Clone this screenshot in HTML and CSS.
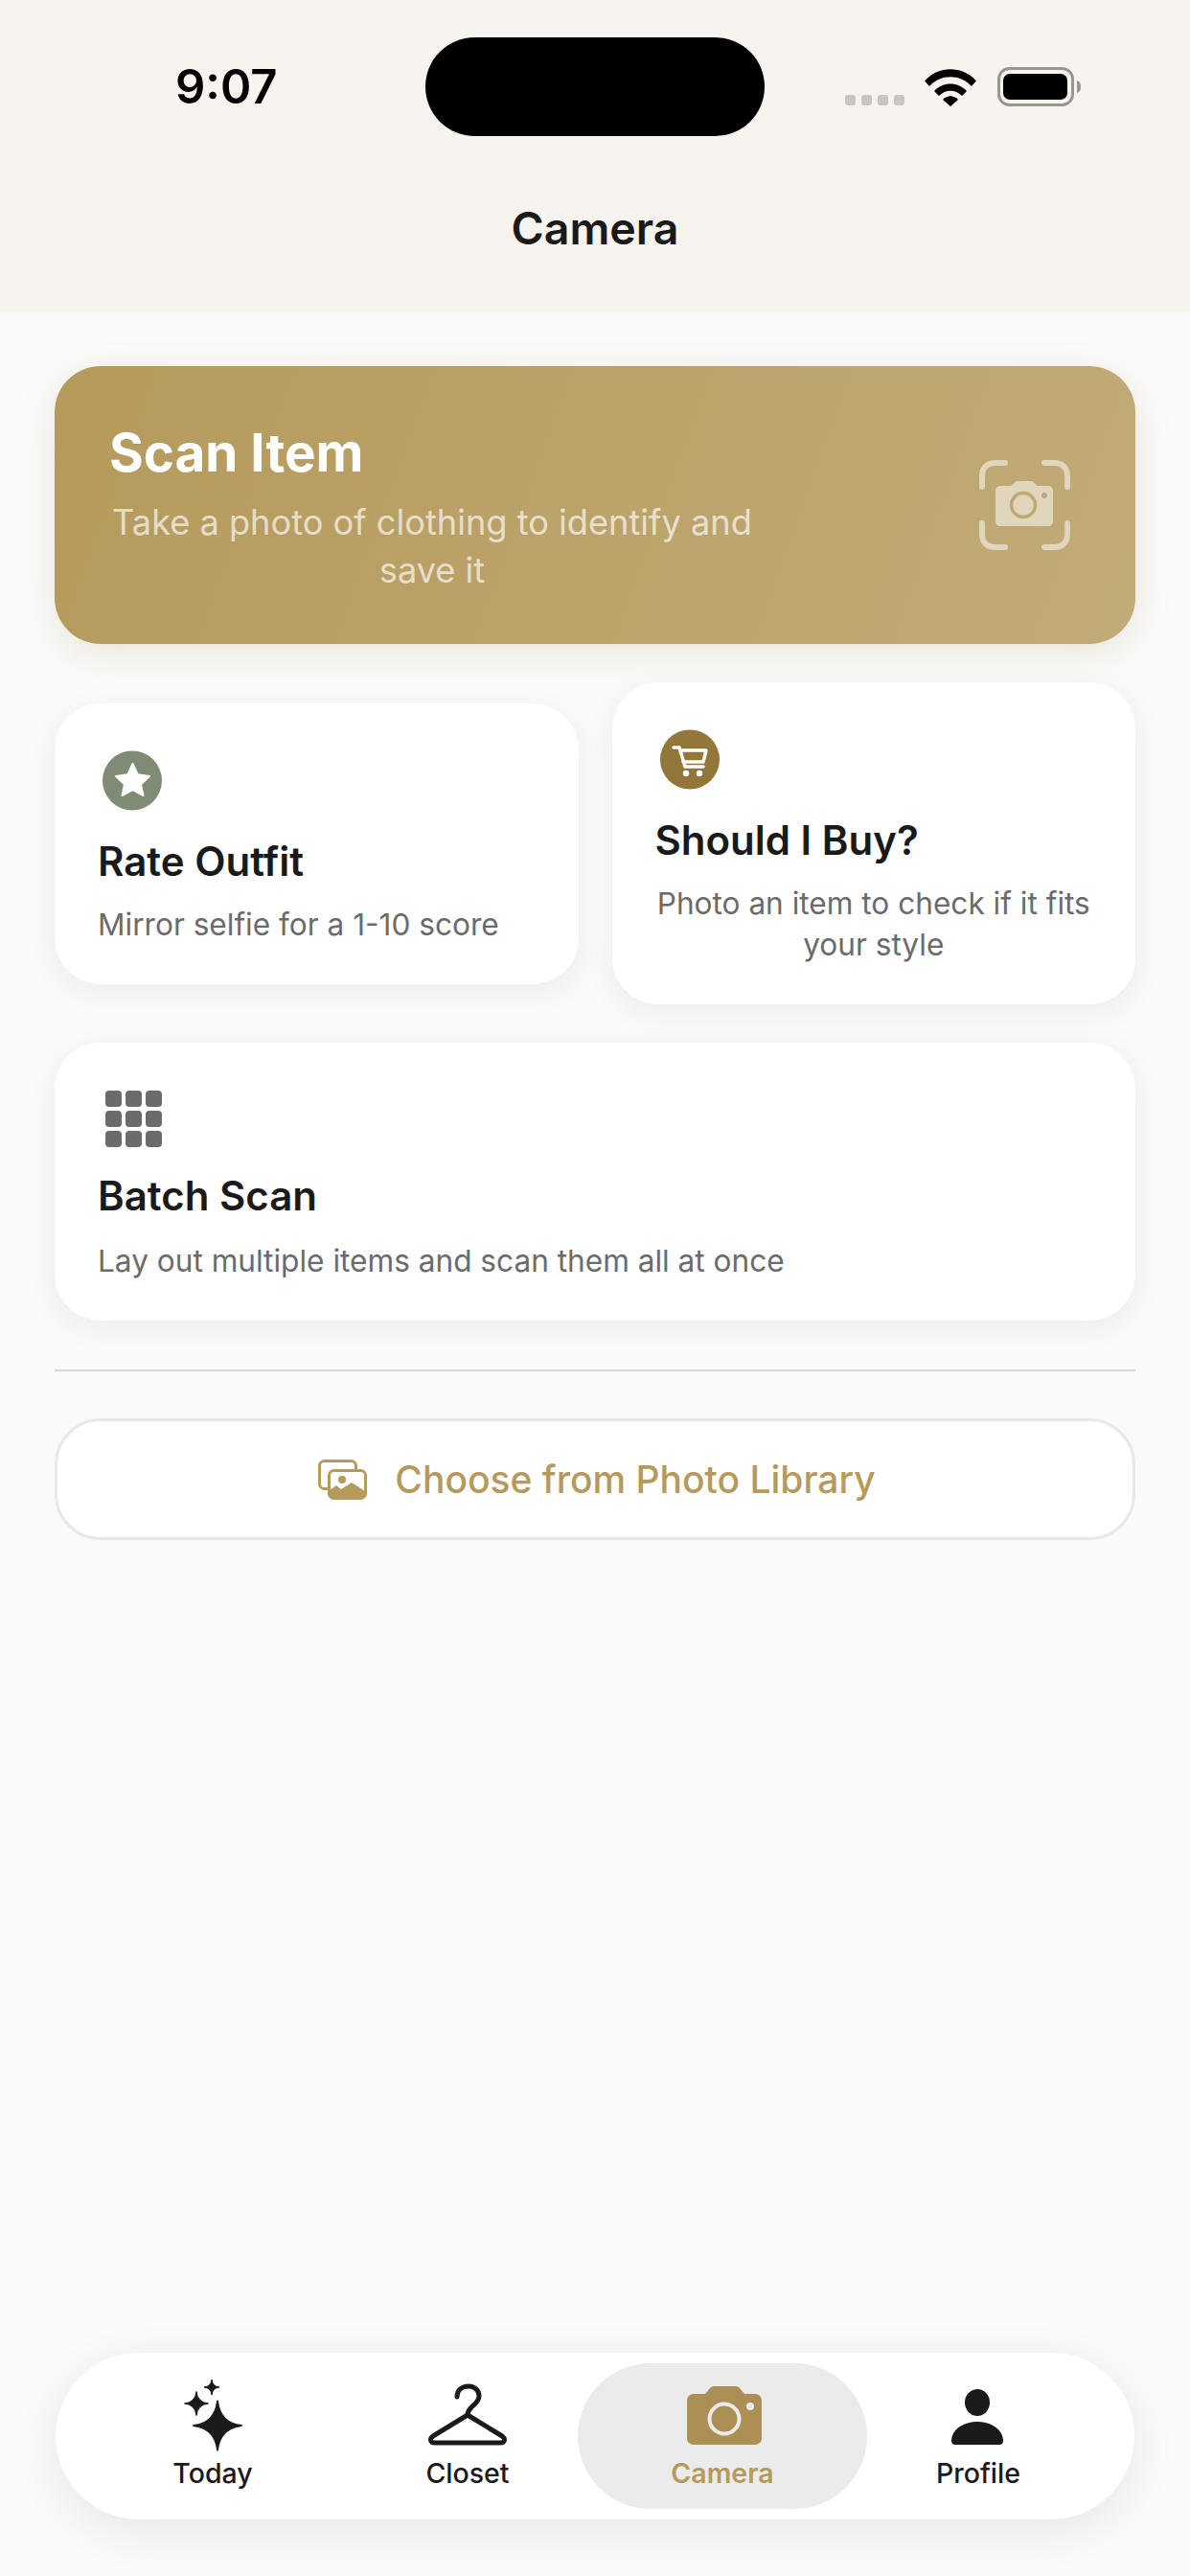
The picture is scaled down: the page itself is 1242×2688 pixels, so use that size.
FILE: index.html
```html
<!DOCTYPE html>
<html lang="en">
<head>
    <meta charset="UTF-8">
    <meta name="viewport" content="width=device-width, initial-scale=1">
    <title>Camera</title>
    <link rel="stylesheet" href="styles.css">
</head>
<body>
    <header class="header">
        <div class="status-bar">
            <div class="time">9:07</div>
            <div class="island"></div>
            <div class="status-icons">
                <div class="signal"><span></span><span></span><span></span><span></span></div>
                <svg class="wifi" width="54" height="39" viewBox="0 0 54 39">
                    <path d="M0 12.5C14-4 40-4 54 12.5L49 18C37 5 17 5 5 18Z"/>
                    <path d="M10 23C19 13 35 13 44 23L39 28C32 21 22 21 15 28Z"/>
                    <path d="M19 32C24 27 30 27 35 32L27 39Z"/>
                </svg>
                <svg class="battery" width="87" height="41" viewBox="0 0 87 41">
                    <rect x="1.5" y="1.5" width="77" height="38" rx="11" fill="none" stroke="#99968f" stroke-width="3"/>
                    <rect x="6" y="7" width="67" height="27" rx="7"/>
                    <path d="M83 14C86 15 87 17 87 20.500C87 24 86 26 83 27Z" fill="#99968f"/>
                </svg>
            </div>
        </div>
        <h1 class="page-title">Camera</h1>
    </header>

    <main class="content">
        <section class="scan-card">
            <div class="scan-text">
                <h2>Scan Item</h2>
                <p>Take a photo of clothing to identify and save it</p>
            </div>
            <svg class="scan-icon" width="95" height="94" viewBox="0 0 95 94">
                <g fill="none" stroke="#e0d6bc" stroke-width="6" stroke-linecap="round">
                    <path d="M3 28V17C3 8 8 3 17 3H27"/>
                    <path d="M68 3H78C87 3 92 8 92 17V28"/>
                    <path d="M3 66V77C3 86 8 91 17 91H27"/>
                    <path d="M68 91H78C87 91 92 86 92 77V66"/>
                </g>
                <path d="M22 27H33L39 22H55L61 27H72C75 27 77 29 77 32V64C77 67 75 69 72 69H22C19 69 17 67 17 64V32C17 29 19 27 22 27Z" fill="#e0d6bc"/>
                <circle cx="46" cy="47" r="12.500" fill="none" stroke="#c0a973" stroke-width="3.500"/>
                <circle cx="68" cy="37" r="3" fill="#c0a973"/>
            </svg>
        </section>

        <div class="card-row">
            <section class="card">
                <svg class="card-icon" width="62" height="63" viewBox="0 0 62 63">
                    <circle cx="31" cy="31.500" r="31" fill="#7f8c75"/>
                    <path d="M31.500 14L36.800 25.300L49 27L40 35.500L42.500 47L31.500 41L20.500 47L23 35.500L14 27L26.200 25.300Z" fill="#fff" stroke="#fff" stroke-width="2" stroke-linejoin="round"/>
                </svg>
                <h3>Rate Outfit</h3>
                <p>Mirror selfie for a 1-10 score</p>
            </section>
            <section class="card">
                <svg class="card-icon" width="62" height="63" viewBox="0 0 62 63">
                    <circle cx="31" cy="31.500" r="31" fill="#93763a"/>
                    <g fill="none" stroke="#fff" stroke-width="3.500" stroke-linecap="round" stroke-linejoin="round">
                        <path d="M14 19H20L26 39H45"/>
                        <path d="M21 22H48L45 34H24"/>
                    </g>
                    <circle cx="27" cy="46" r="3.200" fill="#fff"/>
                    <circle cx="41" cy="46" r="3.200" fill="#fff"/>
                </svg>
                <h3>Should I Buy?</h3>
                <p class="centered">Photo an item to check if it fits your style</p>
            </section>
        </div>

        <section class="card batch-card">
            <div class="grid-icon">
                <span></span><span></span><span></span>
                <span></span><span></span><span></span>
                <span></span><span></span><span></span>
            </div>
            <h3>Batch Scan</h3>
            <p>Lay out multiple items and scan them all at once</p>
        </section>

        <hr class="divider">

        <button class="library-btn">
            <svg width="51" height="42" viewBox="0 0 51 42">
                <rect x="1.500" y="1.500" width="38" height="29" rx="5" fill="none" stroke="#b59a5b" stroke-width="3"/>
                <rect x="11.500" y="11.500" width="38" height="29" rx="5" fill="#fff" stroke="#b59a5b" stroke-width="3"/>
                <circle cx="25" cy="21" r="4" fill="#b59a5b"/>
                <path d="M12 32L19 27L24 31L35 24L49 33V37C49 39 47 40 45 40H16C14 40 12 39 12 37Z" fill="#b59a5b"/>
            </svg>
            <span>Choose from Photo Library</span>
        </button>
    </main>

    <nav class="tab-bar">
        <div class="tab">
            <svg width="84" height="76" viewBox="0 0 84 76" fill="#1a1a1a">
                <path d="M47 23.500Q49.500 46.500 72 49Q49.500 51.500 47 74.500Q44.500 51.500 22 49Q44.500 46.500 47 23.500Z" stroke="#1a1a1a" stroke-width="2" stroke-linejoin="round"/>
                <path d="M25 13.500Q26.200 24.800 37.500 26Q26.200 27.200 25 38.500Q23.800 27.200 12.500 26Q23.800 24.800 25 13.500Z" stroke="#1a1a1a" stroke-width="1" stroke-linejoin="round"/>
                <path d="M41 1Q41.800 8.200 49 9Q41.800 9.800 41 17Q40.200 9.800 33 9Q40.200 8.200 41 1Z" stroke="#1a1a1a" stroke-width="1" stroke-linejoin="round"/>
            </svg>
            <span>Today</span>
        </div>
        <div class="tab">
            <svg width="84" height="76" viewBox="0 0 84 76">
                <path d="M31 19C31 12 36 8 43 8C50 8 54 13 54 18C54 24 49 27 46 30C43 33 42 35 42 38L78 60C82 63 81 67 76 67H8C3 67 2 63 6 60L42 38" fill="none" stroke="#1a1a1a" stroke-width="5" stroke-linecap="round" stroke-linejoin="round"/>
            </svg>
            <span>Closet</span>
        </div>
        <div class="tab active">
            <svg width="84" height="76" viewBox="0 0 84 76">
                <path d="M12 16H24L29 10C30 9 31 8 33 8H56C58 8 59 9 60 10L65 16H76C80 16 83 19 83 23V62C83 66 80 69 76 69H12C8 69 5 66 5 62V23C5 19 8 16 12 16Z" fill="#ab8f55"/>
                <circle cx="44" cy="42" r="15.500" fill="none" stroke="#ebebeb" stroke-width="4"/>
                <circle cx="71" cy="29" r="4" fill="#ebebeb"/>
            </svg>
            <span>Camera</span>
        </div>
        <div class="tab">
            <svg width="84" height="76" viewBox="0 0 84 76" fill="#1a1a1a">
                <ellipse cx="41" cy="25" rx="13" ry="14"/>
                <path d="M14 65C14 53 27 45 41 45C55 45 68 53 68 65C68 68 66 69 64 69H18C16 69 14 68 14 65Z"/>
            </svg>
            <span>Profile</span>
        </div>
    </nav>
</body>
</html>
```

FILE: styles.css
```css
* {
    box-sizing: border-box;
}
body {
    margin: 0;
    height: 2688px;
    display: flex;
    flex-direction: column;
    overflow: hidden;
    font-family: Inter, "Liberation Sans", sans-serif;
    background-color: #fafafa;
    color: #1a1a1a;
}
h1, h2, h3, p {
    margin: 0;
}

/* Header + status bar */
.header {
    height: 326px;
    background-color: #f7f4ef;
}
.status-bar {
    display: flex;
    padding: 39px 0 0 183px;
}
.time {
    width: 261px;
    margin-top: 25px;
    font-size: 49px;
    line-height: 54px;
    font-weight: 600;
    color: #000;
}
.island {
    width: 354px;
    height: 103px;
    border-radius: 52px;
    background-color: #000;
}
.status-icons {
    display: flex;
    align-items: flex-end;
    height: 72px;
    margin-left: 84px;
}
.signal {
    display: flex;
    gap: 6.5px;
    margin-bottom: 1px;
}
.signal span {
    width: 10.5px;
    height: 11px;
    border-radius: 3px;
    background-color: #c9c6c0;
}
.wifi {
    margin: 0 22px 0 21px;
    flex: none;
}
.battery {
    flex: none;
}
.page-title {
    margin-top: 66px;
    text-align: center;
    font-size: 46.5px;
    line-height: 60px;
    font-weight: 560;
}

/* Main column */
.content {
    flex: 1;
    display: flex;
    flex-direction: column;
    padding: 56px 57px 0;
}
.scan-card {
    display: flex;
    align-items: center;
    justify-content: space-between;
    height: 290px;
    padding: 4px 68px 0 57px;
    border-radius: 48px;
    background: linear-gradient(110deg, #b59a5b, #c1ab78);
    box-shadow: 0 10px 36px rgba(181, 154, 91, 0.2);
}
.scan-text {
    width: 674px;
    color: #fff;
}
.scan-text h2 {
    font-size: 54.7px;
    line-height: 68px;
    font-weight: 700;
}
.scan-text p {
    margin-top: 14px;
    text-align: center;
    font-size: 36.2px;
    line-height: 50px;
    color: rgba(255, 255, 255, 0.68);
}
.scan-icon {
    margin-top: -4px;
}
.card-row {
    display: flex;
    align-items: center;
    gap: 35px;
    margin-top: 40px;
}
.card {
    flex: 1;
    padding: 49px 45px 41px;
    border-radius: 48px;
    background-color: #fff;
    box-shadow: 0 8px 32px rgba(0, 0, 0, 0.06);
}
.card h3 {
    margin-top: 28px;
    font-size: 42px;
    line-height: 50px;
    font-weight: 600;
}
.card p {
    margin-top: 19px;
    font-size: 31.6px;
    line-height: 43px;
    color: #6b6b6b;
}
.card p.centered {
    text-align: center;
}
.card-icon {
    display: block;
    margin-left: 5px;
}
.batch-card {
    flex: none;
    margin-top: 40px;
    padding-top: 50px;
}
.batch-card h3 {
    margin-top: 26px;
}
.batch-card p {
    margin-top: 21px;
}
.grid-icon {
    display: grid;
    grid-template-columns: repeat(3, 17px);
    grid-auto-rows: 17px;
    gap: 4px;
    margin-left: 8px;
}
.grid-icon span {
    border-radius: 4px;
    background-color: #6b6b6b;
}
.divider {
    width: 100%;
    height: 2px;
    margin: 51px 0 49px;
    border: none;
    background-color: #d9d9d9;
}
.library-btn {
    display: flex;
    align-items: center;
    justify-content: center;
    gap: 29px;
    height: 127px;
    padding-left: 10px;
    border: 3px solid #e8e8e8;
    border-radius: 48px;
    background-color: #fff;
    font-family: inherit;
    font-size: 39px;
    font-weight: 500;
    color: #b59a5b;
}

/* Bottom tabs */
.tab-bar {
    display: grid;
    grid-template-columns: repeat(3, 266px) 268px;
    height: 174px;
    margin: 0 58px 59px;
    padding: 11px 29px 11px 31px;
    border-radius: 87px;
    background-color: #fff;
    box-shadow: 0 12px 48px rgba(0, 0, 0, 0.08);
}
.tab {
    display: flex;
    flex-direction: column;
    align-items: center;
    gap: 6px;
    padding-top: 16px;
    font-size: 28.5px;
    line-height: 34px;
    font-weight: 500;
}
.tab.active {
    margin: 0 -18px;
    border-radius: 76px;
    background-color: #ebebeb;
    color: #b59a5b;
    font-weight: 600;
}
```
